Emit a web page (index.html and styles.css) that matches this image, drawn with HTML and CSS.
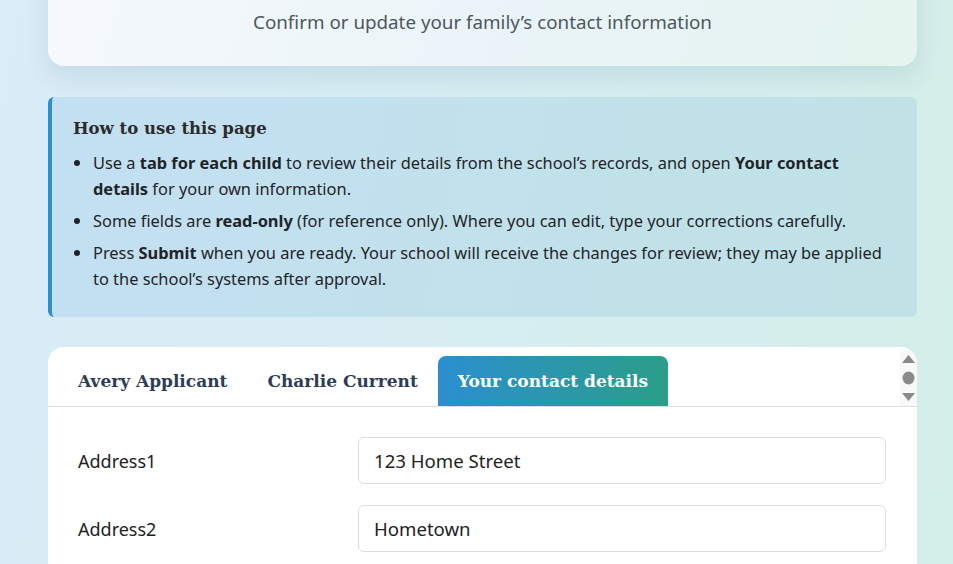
FILE: index.html
```html
<!DOCTYPE html>
<html lang="en">
<head>
    <meta charset="UTF-8">
    <meta name="viewport" content="width=device-width, initial-scale=1.0">
    <title>Contact details</title>
    <link rel="stylesheet" href="styles.css">
</head>
<body>
    <div class="page">
        <header class="hero">
            <p class="subtitle">Confirm or update your family’s contact information</p>
        </header>

        <section class="howto">
            <h2>How to use this page</h2>
            <ul>
                <li>Use a <b>tab for each child</b> to review their details from the school’s records, and open <b>Your contact details</b> for your own information.</li>
                <li>Some fields are <b>read-only</b> (for reference only). Where you can edit, type your corrections carefully.</li>
                <li>Press <b>Submit</b> when you are ready. Your school will receive the changes for review; they may be applied to the school’s systems after approval.</li>
            </ul>
        </section>

        <section class="card">
            <div class="tabs">
                <div class="tab">Avery Applicant</div>
                <div class="tab">Charlie Current</div>
                <div class="tab active">Your contact details</div>
                <!-- little scroll widget of the tab strip -->
                <svg class="tab-scroll" width="17" height="56" viewBox="0 0 17 56">
                    <path d="M8.5 5 L15 13 L2 13 Z" fill="#8a8a8a"/>
                    <ellipse cx="8.5" cy="28" rx="6" ry="6.5" fill="#8a8a8a"/>
                    <path d="M2 43 L15 43 L8.5 51 Z" fill="#8a8a8a"/>
                </svg>
            </div>
            <form class="fields">
                <label for="address1">Address1</label>
                <input type="text" id="address1" value="123 Home Street">
                <label for="address2">Address2</label>
                <input type="text" id="address2" value="Hometown">
            </form>
        </section>
    </div>
</body>
</html>
```

FILE: styles.css
```css
* {
    margin: 0;
    padding: 0;
    box-sizing: border-box;
}

html, body {
    height: 100%;
    overflow: hidden;
}

body {
    font-family: "Noto Sans", sans-serif;
    background: linear-gradient(100deg, #d9ecf8 0%, #d6edf0 60%, #d4eee8 100%);
    color: #222;
}

.page {
    width: 869px;
    margin-left: 48px;
}

.hero {
    margin-top: -60px;
    padding: 69px 20px 31px;
    background: linear-gradient(110deg, #f6f9fd 0%, #eaf4f8 55%, #e5f4ef 100%);
    border-radius: 16px;
    box-shadow: 0 10px 24px rgba(40, 90, 120, 0.12);
    text-align: center;
}

.subtitle {
    font-size: 18.8px;
    line-height: 26px;
    color: #4d5761;
}

.howto {
    margin-top: 31px;
    padding: 20px 30px 25px 21px;
    background: linear-gradient(100deg, #c3e0f3 0%, #c1e1ea 60%, #c0e2e6 100%);
    border-left: 4px solid #2b8fd0;
    border-radius: 6px;
}

.howto h2 {
    font-family: "DejaVu Serif", serif;
    font-size: 16.5px;
    line-height: 24px;
    color: #2b2b2b;
    margin-bottom: 9px;
}

.howto ul {
    padding-left: 20px;
    font-size: 16.4px;
    line-height: 26px;
    color: #1f2428;
}

.howto li + li {
    margin-top: 6px;
}

.card {
    margin-top: 30px;
    background: #fff;
    border-radius: 16px 16px 0 0;
    overflow: hidden;
    height: 240px;
}

.tabs {
    position: relative;
    display: flex;
    padding: 9px 10px 0;
    height: 60px;
    border-bottom: 1px solid #dedfe8;
}

.tab {
    flex: none;
    height: 50px;
    padding: 0 20px;
    display: flex;
    align-items: center;
    font-family: "DejaVu Serif", serif;
    font-weight: bold;
    font-size: 17px;
    color: #2c3e55;
    border-radius: 8px 8px 0 0;
}

.tab.active {
    color: #fff;
    background: linear-gradient(90deg, #2b8fd0 0%, #2b9e88 100%);
}

.tab-scroll {
    position: absolute;
    top: 3px;
    right: 0;
    background: #f8f8f8;
}

.fields {
    display: grid;
    grid-template-columns: 280px 1fr;
    align-items: center;
    row-gap: 21px;
    padding: 30px 31px 30px 30px;
}

.fields label {
    font-size: 18px;
    color: #222;
}

.fields input {
    height: 47px;
    padding: 0 15px;
    font-family: inherit;
    font-size: 18.6px;
    color: #222;
    border: 1px solid #dcdde5;
    border-radius: 6px;
    background: #fff;
}
```
